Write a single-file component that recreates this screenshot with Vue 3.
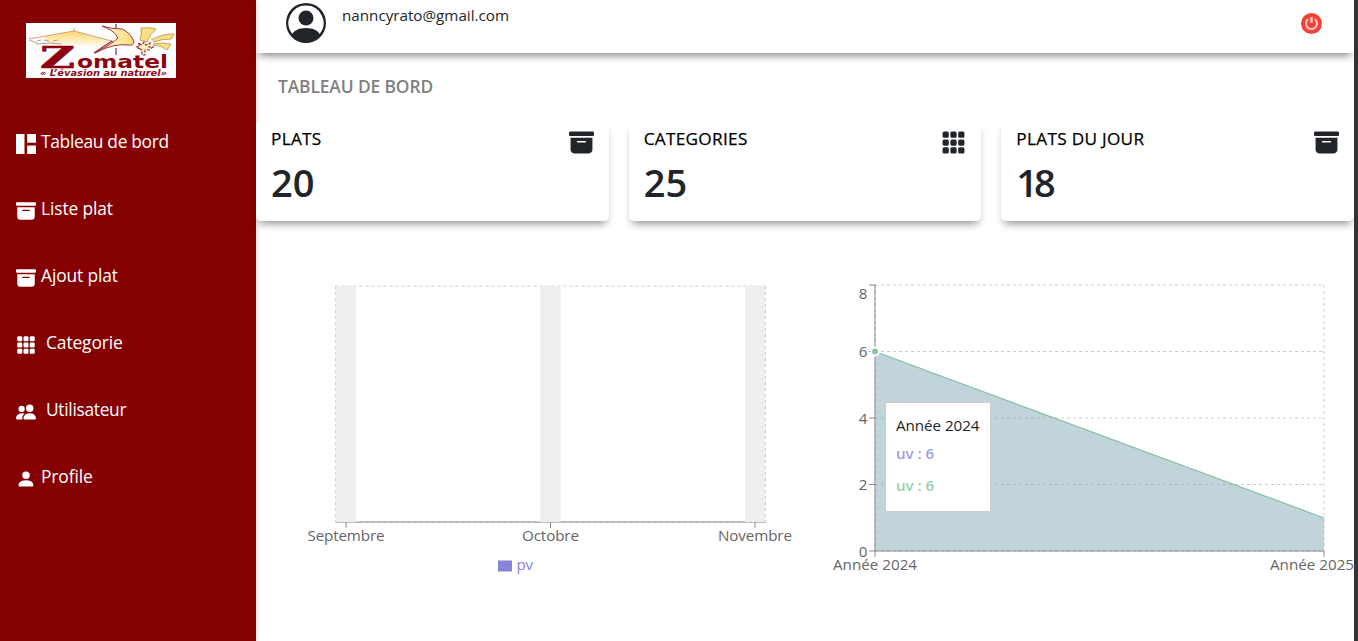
<script setup>
const archive =
  'M12.643 15C13.979 15 15 13.845 15 12.5V5H1v7.5C1 13.845 2.021 15 3.357 15zM5.5 7h5a.5.5 0 0 1 0 1h-5a.5.5 0 0 1 0-1M.8 1a.8.8 0 0 0-.8.8V3a.8.8 0 0 0 .8.8h14.4A.8.8 0 0 0 16 3V1.8a.8.8 0 0 0-.8-.8z'
const cell = (x, y) =>
  `M${x} ${y + 1}a1 1 0 0 1 1-1h2a1 1 0 0 1 1 1v2a1 1 0 0 1-1 1h-2a1 1 0 0 1-1-1z`
const grid = [1, 6, 11].flatMap((y) => [1, 6, 11].map((x) => cell(x, y))).join('')
const dashboard =
  'M.5 0h6.3v16H.5a.5.5 0 0 1-.5-.5V.5A.5.5 0 0 1 .5 0M8.9 0h6.6a.5.5 0 0 1 .5.5v6.4H8.9zM8.9 9.1H16v6.4a.5.5 0 0 1-.5.5H8.9z'
const people =
  'M7 14s-1 0-1-1 1-4 5-4 5 3 5 4-1 1-1 1zm4-6a3 3 0 1 0 0-6 3 3 0 0 0 0 6m-5.784 6A2.24 2.24 0 0 1 5 13c0-1.355.68-2.75 1.936-3.72A6.3 6.3 0 0 0 5 9c-4 0-5 3-5 4s1 1 1 1zM4.5 8a2.5 2.5 0 1 0 0-5 2.5 2.5 0 0 0 0 5'
const person = 'M3 14s-1 0-1-1 1-4 6-4 6 3 6 4-1 1-1 1zm5-6a3 3 0 1 0 0-6 3 3 0 0 0 0 6'

const menu = [
  { label: 'Tableau de bord', icon: dashboard, tight: true },
  { label: 'Liste plat', icon: archive },
  { label: 'Ajout plat', icon: archive },
  { label: 'Categorie', icon: grid, wide: true },
  { label: 'Utilisateur', icon: people, wide: true, tight: true },
  { label: 'Profile', icon: person },
]
const cards = [
  { title: 'PLATS', value: 20, icon: archive },
  { title: 'CATEGORIES', value: 25, icon: grid },
  { title: 'PLATS DU JOUR', value: 18, icon: archive },
]
const months = [
  { name: 'Septembre', x: 346, w: 77 },
  { name: 'Octobre', x: 550.5, w: 57 },
  { name: 'Novembre', x: 755, w: 74 },
]
const levels = [
  { v: 8, y: 285, ty: 299 },
  { v: 6, y: 351.5, ty: 357 },
  { v: 4, y: 418, ty: 424 },
  { v: 2, y: 484.5, ty: 490 },
  { v: 0, y: 551, ty: 557 },
]
</script>

<template>
  <div class="app">
    <aside class="sidebar">
      <svg class="logo" viewBox="0 0 150 55" width="150" height="55">
        <defs>
          <linearGradient id="roof" x1="0" y1="0" x2="0" y2="1">
            <stop offset="0" stop-color="#fbd76b" />
            <stop offset="1" stop-color="#fffdf5" />
          </linearGradient>
          <linearGradient id="sail" x1="0" y1="0" x2="1" y2="0">
            <stop offset="0" stop-color="#fffbe8" />
            <stop offset="1" stop-color="#fbdc78" />
          </linearGradient>
        </defs>
        <rect width="150" height="55" fill="#fdfdfd" />
        <path d="M18 14 48 8l48 14-26 2-24-3-23 1z" fill="url(#roof)" />
        <path d="M3 16 48 8l53 14" fill="none" stroke="#d3935f" stroke-width=".9" />
        <path d="M48 5v3M3 17l8 3M11 18l4-1M18 17l5 1M27 18l5-1M10 21l14-1 12 1" fill="none" stroke="#aa8880" stroke-width=".8" />
        <path d="M76 3q9 3 20 3 9 4 12 13-1 4-5 3-16-2-34 8 17-9 23-15-4-8-16-12z" fill="url(#sail)" stroke="#98222c" stroke-width=".9" />
        <path d="M90 1v4M90 25v7M68 30l18-12" fill="none" stroke="#9c2634" stroke-width="1.2" />
        <path d="M115 5q8-1 15 1-6 5-9 13l-7-2q2-6 1-12M125 17q10-6 23-6-1 3-3 5-9 0-18 3M127 21q10-2 18 0l-4 6q-6-5-14-5" fill="#fbdf83" stroke="#bd8d47" stroke-width=".8" />
        <path d="m114 26-4-2 4-1-2-3 4 2 2-3 2 3 4-2-1 4 4 0-4 3-4 0v5h-3v-5z" fill="#fff2bd" stroke="#9c2634" stroke-width="1.2" stroke-dasharray="3 1.5" />
        <text x="14" y="45" class="logo-z" textLength="35" lengthAdjust="spacingAndGlyphs">Z</text>
        <text x="51" y="45" class="logo-name" textLength="91" lengthAdjust="spacingAndGlyphs">omatel</text>
        <text x="14" y="53" class="logo-tag" textLength="127" lengthAdjust="spacingAndGlyphs">« L’évasion au naturel»</text>
      </svg>
      <nav class="menu">
        <a v-for="m in menu" :key="m.label" class="item" :class="{ wide: m.wide, tight: m.tight }">
          <svg width="20" height="20" viewBox="0 0 16 16" fill="currentColor"><path fill-rule="evenodd" :d="m.icon" /></svg>
          <span>{{ m.label }}</span>
        </a>
      </nav>
    </aside>

    <main class="main">
      <header class="topbar">
        <svg class="avatar" width="40" height="40" viewBox="0 0 16 16" fill="currentColor">
          <path d="M11 6a3 3 0 1 1-6 0 3 3 0 0 1 6 0" />
          <path fill-rule="evenodd" d="M0 8a8 8 0 1 1 16 0A8 8 0 0 1 0 8m8-7a7 7 0 0 0-5.468 11.37C3.242 11.226 4.805 10 8 10s4.757 1.225 5.468 2.37A7 7 0 0 0 8 1" />
        </svg>
        <span class="email">nanncyrato@gmail.com</span>
        <svg class="power" width="21" height="21" viewBox="0 0 21 21">
          <circle cx="10.5" cy="10.5" r="10.5" fill="#f44336" />
          <path d="M7.2 6.4Q5 7.6 5 10.6a5.5 5.5 0 0 0 11 0q0-3-2.2-4.2" fill="none" stroke="#ffcdd2" stroke-width="1.9" />
          <path d="M10.5 4v6" stroke="#ffcdd2" stroke-width="2.4" />
        </svg>
      </header>

      <h1 class="heading">TABLEAU DE BORD</h1>

      <section class="cards">
        <article v-for="c in cards" :key="c.title" class="card">
          <div class="card-head">
            <h2>{{ c.title }}</h2>
            <svg width="25" height="25" viewBox="0 0 16 16" fill="currentColor"><path fill-rule="evenodd" :d="c.icon" /></svg>
          </div>
          <strong :class="{ narrow: c.value === 18 }">{{ c.value }}</strong>
        </article>
      </section>

      <section class="charts">
        <svg class="chart" viewBox="256 271 549 330" width="549" height="330">
          <g class="grid-line">
            <path d="M335.5 286H765.5M335.5 522H765.5" />
            <path d="M335.5 286V522M765.5 286V522" />
          </g>
          <path d="M336 522H765.5" class="axis" />
          <g v-for="m in months" :key="m.name">
            <rect :x="m.x - 10.2" y="286" width="20.2" height="236" fill="#eee" />
            <path :d="`M${m.x} 522v6`" class="axis" />
            <text :x="m.x" y="541" text-anchor="middle" :textLength="m.w">{{ m.name }}</text>
          </g>
          <rect x="498" y="560.5" width="14" height="11" fill="#8884d8" />
          <text x="516.5" y="570" class="legend" textLength="16.5">pv</text>
        </svg>

        <div class="area">
          <svg class="chart" viewBox="805 271 549 330" width="549" height="330">
            <g class="grid-line">
              <path v-for="l in levels" :key="l.v" :d="`M875 ${l.y}H1324`" />
              <path d="M875 285V551M1324 285V551" />
            </g>
            <path d="M875 285V551M875 551H1324M875 551v6M1324 551v6" class="axis" />
            <g v-for="l in levels" :key="l.v">
              <path :d="`M869 ${l.y}h6`" class="axis" />
              <text x="867.5" :y="l.ty" text-anchor="end">{{ l.v }}</text>
            </g>
            <text x="875" y="570" text-anchor="middle" textLength="84">Année 2024</text>
            <text x="1312" y="570" text-anchor="middle" textLength="84">Année 2025</text>
            <path d="M875 351.5 1324 518V551H875z" fill="#82aab4" fill-opacity=".5" />
            <path d="M875 351.5 1324 518" fill="none" stroke="#82c0a5" stroke-width="1.2" />
            <circle cx="875" cy="351.5" r="4" fill="#82ca9d" stroke="#fff" stroke-width="2" />
          </svg>
          <div class="tooltip">
            <p>Année 2024</p>
            <p class="violet">uv : 6</p>
            <p class="green">uv : 6</p>
          </div>
        </div>
      </section>
    </main>
    <div class="edge"></div>
  </div>
</template>

<style>
body { margin: 0; overflow: hidden; }
</style>

<style scoped>
.app {
  display: flex;
  height: 641px;
  background: #fff;
  color: #212529;
  font-family: "Open Sans", "Noto Sans", sans-serif;
  font-size: 15.2px;
  overflow: hidden;
}
.sidebar {
  width: 256px;
  flex: none;
  box-sizing: border-box;
  padding-top: 23px;
  background: #850000;
  color: #fff;
  box-shadow: 0 0 6px rgba(0, 0, 0, .2);
}
.logo { display: block; margin-left: 26px; }
.logo-z { font: bold 29px "DejaVu Serif", serif; fill: #8d0410; stroke: #8d0410; stroke-width: .6; }
.logo-name { font: bold 18px "DejaVu Sans", sans-serif; fill: #8d0410; }
.logo-tag { font: italic bold 8px "DejaVu Sans", sans-serif; fill: #8d0d1c; }
.menu { display: flex; flex-direction: column; gap: 43px; padding: 54px 0 0 16px; }
.item { display: flex; align-items: flex-end; gap: 5px; height: 24px; font-size: 17.4px; line-height: 24px; letter-spacing: -.12px; }
.item.tight { letter-spacing: -.32px; }
.item span { position: relative; top: -3px; }
.item.wide { gap: 10px; }
.item svg { display: block; margin-bottom: 2px; }

.main { flex: 1; min-width: 0; display: flex; flex-direction: column; }
.topbar {
  display: flex;
  align-items: flex-start;
  height: 53px;
  flex: none;
  box-sizing: border-box;
  padding: 3px 32px 0 30px;
  box-shadow: 0 6px 8px -4px rgba(0, 0, 0, .45), 0 4px 8px rgba(0, 0, 0, .08);
}
.email { margin-left: 16px; line-height: 24px; letter-spacing: 0; }
.power { margin: 10px 0 0 auto; }
.heading { margin: 22px 0 0 22px; font-size: 17.4px; font-weight: 600; line-height: 22px; color: #808080; letter-spacing: -.12px; }
.cards { display: grid; grid-template-columns: repeat(3, 1fr); gap: 20px; margin-top: 24px; }
.card {
  height: 100px;
  box-sizing: border-box;
  padding: 7px 15px 0;
  border-radius: 5px;
  background: #fff;
  box-shadow: 0 6px 8px -4px rgba(0, 0, 0, .42), 0 5px 6px rgba(0, 0, 0, .06);
}
.card-head { display: flex; justify-content: space-between; height: 32px; }
.card-head svg { margin-top: 2px; }
.card h2 { margin: 0; font-size: 17.2px; font-weight: 500; line-height: 22px; color: #000; letter-spacing: .3px; -webkit-text-stroke: .25px #000; }
.card strong { display: block; font-size: 38px; font-weight: 600; line-height: 44px; }
.card strong.narrow { letter-spacing: -4px; }
.charts { display: grid; grid-template-columns: 1fr 1fr; margin-top: 50px; }
.chart { display: block; }
.chart text { font-size: 15.2px; fill: #666; }
.chart .legend { fill: #8884d8; }
.grid-line { stroke: #ccc; stroke-width: 1; stroke-dasharray: 3 3; fill: none; }
.axis { stroke: #666; stroke-width: 1; fill: none; opacity: .75; }
.area { position: relative; }
.tooltip {
  position: absolute;
  left: 80px;
  top: 131px;
  width: 106px;
  height: 110px;
  box-sizing: border-box;
  padding: 10px;
  border: 1px solid #ccc;
  background: #fff;
  white-space: nowrap;
  letter-spacing: -.05px;
}
.tooltip p { margin: 0; line-height: 24px; }
.tooltip .violet { margin-top: 4px; color: #a09de0; font-weight: 600; }
.tooltip .green { margin-top: 8px; color: #93d1aa; font-weight: 600; }
.edge { width: 4px; flex: none; background: #333; }
</style>
